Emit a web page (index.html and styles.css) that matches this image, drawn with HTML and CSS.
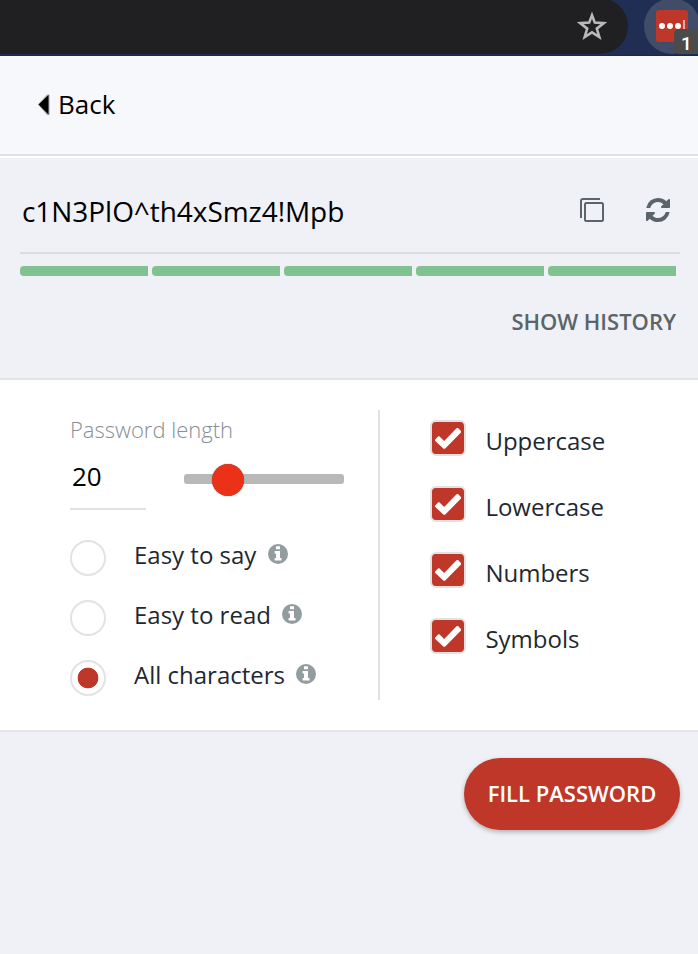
FILE: index.html
```html
<!DOCTYPE html>
<html lang="en">
<head>
<meta charset="utf-8">
<title>Generate Password</title>
<link rel="stylesheet" href="styles.css">
</head>
<body>
<div class="browser-bar">
  <div class="address">
    <svg class="star" width="30" height="30" viewBox="0 0 30 30"><path d="M15 4.2 L17.8 11.6 L26.8 12.2 L19.8 17.6 L22.3 26 L15 21.3 L7.7 26 L10.2 17.6 L3.2 12.2 L12.2 11.6 Z"/></svg>
  </div>
  <div class="extension">
    <div class="ext-icon">
      <svg width="32" height="32" viewBox="0 0 32 32"><circle cx="6" cy="16" r="3"/><circle cx="14" cy="16" r="3"/><circle cx="22" cy="16" r="3"/><rect x="27" y="10" width="2" height="12"/></svg>
    </div>
    <span class="badge">1</span>
  </div>
</div>
<header class="back-bar">
  <svg class="back-arrow" width="14" height="24" viewBox="0 0 14 24"><path class="arrow-edge" d="M1 11.5 L10 1.5 H12.500 V22 H10 Z"/><path d="M1.500 11.5 L11.500 2 V21.5 Z"/></svg>
  <span>Back</span>
</header>
<section class="result">
  <div class="password-row">
    <span class="password">c1N3PlO^th4xSmz4!Mpb</span>
    <svg class="copy" width="24" height="24" viewBox="0 0 24 24"><path d="M1 20 V3 Q1 1 3 1 H20"/><rect x="5" y="5" width="18" height="18" rx="1.5"/></svg>
    <svg class="refresh" width="24" height="24" viewBox="0 0 1536 1536"><path d="M1511 928q0 5-1 7-64 268-268 434.500T764 1536q-146 0-282.500-55T238 1324l-129 129q-19 19-45 19t-45-19-19-45V960q0-26 19-45t45-19h448q26 0 45 19t19 45-19 45l-137 137q71 66 161 102t187 36q134 0 250-65t186-179q11-17 53-117 8-23 30-23h192q13 0 22.500 9.500T1511 928zM1536 128v448q0 26-19 45t-45 19h-448q-26 0-45-19t-19-45 19-45l138-138Q969 256 768 256q-134 0-250 65T332 500q-11 17-53 117-8 23-30 23H50q-13 0-22.500-9.500T18 608v-7q65-268 270-434.500T768 0q146 0 284 55.500T1297 212l130-129q19-19 45-19t45 19 19 45z"/></svg>
  </div>
  <div class="strength"><i></i><i></i><i></i><i></i><i></i></div>
  <div class="history">SHOW HISTORY</div>
</section>
<main class="options">
  <div class="left">
    <div class="length-label">Password length</div>
    <div class="length-row">
      <div class="length-value">20</div>
      <div class="slider"><div class="thumb"></div></div>
    </div>
    <div class="radio-row"><span class="radio"></span><span class="label">Easy to say</span><svg class="info" width="20" height="20" viewBox="0 0 20 20"><circle cx="10" cy="10" r="10"/><path d="M8 2.3h4v3H8zM6.6 7h5.4v7h1.5v2.6H6.6V14H8V9.600H6.600z"/></svg></div>
    <div class="radio-row"><span class="radio"></span><span class="label">Easy to read</span><svg class="info" width="20" height="20" viewBox="0 0 20 20"><circle cx="10" cy="10" r="10"/><path d="M8 2.3h4v3H8zM6.6 7h5.4v7h1.5v2.6H6.6V14H8V9.600H6.600z"/></svg></div>
    <div class="radio-row"><span class="radio checked"></span><span class="label">All characters</span><svg class="info" width="20" height="20" viewBox="0 0 20 20"><circle cx="10" cy="10" r="10"/><path d="M8 2.3h4v3H8zM6.6 7h5.4v7h1.5v2.6H6.6V14H8V9.600H6.600z"/></svg></div>
  </div>
  <div class="right">
    <div class="check-row"><span class="check"><svg width="32" height="32" viewBox="0 0 32 32"><path d="M3 17.700 L6.300 14.300 H7.300 L12.200 19 L24.800 6 H26 L29 9 V10.600 L13 26.800 H11.600 L3 18.800 Z"/></svg></span><span>Uppercase</span></div>
    <div class="check-row"><span class="check"><svg width="32" height="32" viewBox="0 0 32 32"><path d="M3 17.700 L6.300 14.300 H7.300 L12.200 19 L24.800 6 H26 L29 9 V10.600 L13 26.800 H11.600 L3 18.800 Z"/></svg></span><span>Lowercase</span></div>
    <div class="check-row"><span class="check"><svg width="32" height="32" viewBox="0 0 32 32"><path d="M3 17.700 L6.300 14.300 H7.300 L12.200 19 L24.800 6 H26 L29 9 V10.600 L13 26.800 H11.600 L3 18.800 Z"/></svg></span><span>Numbers</span></div>
    <div class="check-row"><span class="check"><svg width="32" height="32" viewBox="0 0 32 32"><path d="M3 17.700 L6.300 14.300 H7.300 L12.200 19 L24.800 6 H26 L29 9 V10.600 L13 26.800 H11.600 L3 18.800 Z"/></svg></span><span>Symbols</span></div>
  </div>
</main>
<footer class="actions"><button class="fill">FILL PASSWORD</button></footer>
</body>
</html>
```
FILE: styles.css
```css
* { box-sizing: border-box; }
body {
  margin: 0;
  width: 698px;
  height: 954px;
  overflow: hidden;
  background: #eff1f6;
  font-family: "Open Sans", "Noto Sans", sans-serif;
  color: #000;
}
svg { display: block; flex: none; }

.browser-bar {
  display: flex;
  height: 56px;
  background: #1f2e52;
  border-bottom: 1px solid #1b2948;
  overflow: hidden;
}
.address {
  display: flex;
  flex: none;
  justify-content: flex-end;
  width: 628px;
  height: 56px;
  margin-top: -2px;
  padding: 13px 21px 0 0;
  background: #202023;
  border-radius: 0 28px 28px 0;
}
.star { fill: none; stroke: #b9b9ba; stroke-width: 2.6; }
.extension {
  position: relative;
  flex: none;
  width: 56px;
  height: 56px;
  margin: -2px 0 0 16px;
  padding: 12px;
  border-radius: 50%;
  background: #404c68;
}
.ext-icon {
  width: 32px;
  height: 32px;
  border-radius: 3px;
  background: #be3728;
  fill: #fff;
}
.ext-icon rect { fill: #e5aaa3; }
.badge {
  position: absolute;
  left: 30px;
  top: 31px;
  width: 32px;
  height: 25px;
  padding-left: 7px;
  border-radius: 5px;
  background: #4b4b4b;
  color: #fff;
  font: 500 19px/29px Roboto, sans-serif;
}

.back-bar {
  display: flex;
  height: 102px;
  padding: 0 0 0 37px;
  background: #f7f8fb;
  border-bottom: 2px solid #fff;
  box-shadow: inset 0 -2px #e0e1e4;
  font-size: 26px;
  line-height: 96px;
}
.back-arrow { margin: 37px 7px 0 0; }
.arrow-edge { fill: #aaa; }

.result {
  height: 222px;
  padding: 0 18px 0 20px;
  border-bottom: 2px solid #e4e4e5;
}
.password-row {
  display: flex;
  align-items: center;
  height: 96px;
  padding: 10px 10px 0 2px;
  border-bottom: 2px solid #dddddf;
}
.password { flex: 1; padding-top: 2px; font-size: 28px; line-height: 38px; letter-spacing: -.05px; }
.copy { fill: none; stroke: #5b6468; stroke-width: 2; margin-right: 42px; }
.refresh { fill: #5b6468; }
.strength { display: flex; gap: 4px; margin-top: 12px; }
.strength i {
  width: 128px;
  height: 10px;
  border-radius: 4px 0 0 4px;
  background: #80c290;
}
.history {
  margin: 29px 4px 0 0;
  text-align: right;
  font-size: 22px;
  font-weight: 600;
  line-height: 32px;
  color: #5b6468;
}

.options {
  display: flex;
  height: 352px;
  padding: 30px 0 30px 70px;
  background: #fff;
  border-bottom: 2px solid #e4e5e6;
}
.left {
  width: 310px;
  height: 290px;
  padding-top: 3px;
  border-right: 2px solid #e1e1e2;
}
.length-label {
  margin-bottom: 1px;
  font-size: 22px;
  font-weight: 300;
  line-height: 32px;
  color: #858f94;
}
.length-row { display: flex; height: 64px; }
.length-value {
  width: 76px;
  height: 64px;
  padding-left: 2px;
  border-bottom: 2px solid #e1e1e2;
  font-size: 26px;
  line-height: 60px;
}
.slider {
  width: 160px;
  height: 10px;
  margin: 28px 0 0 38px;
  border-radius: 3px;
  background: #b9b9b9;
}
.thumb {
  width: 32px;
  height: 32px;
  margin: -10px 0 0 28px;
  border-radius: 50%;
  background: #eb3218;
  box-shadow: 0 0 1px #555;
}
.radio-row {
  display: flex;
  height: 36px;
  margin-top: 24px;
  font-size: 24px;
  color: #1e2832;
}
.length-row + .radio-row { margin-top: 30px; }
.radio {
  width: 36px;
  height: 36px;
  margin-right: 28px;
  padding: 6px;
  border: 2px solid #e3e3e3;
  border-radius: 50%;
}
.radio.checked { background: radial-gradient(circle, #be3728 10px, #fff 10.7px); }
.label { line-height: 30px; }
.info { margin: 4px 0 0 11.4px; fill: #939c9f; }
.info path { fill: #fff; }

.right { padding: 10px 0 0 50px; }
.check-row {
  display: flex;
  height: 36px;
  margin-bottom: 30px;
  font-size: 24px;
  line-height: 42px;
  color: #1e2832;
}
.check {
  width: 36px;
  height: 36px;
  margin-right: 19.4px;
  border: 2px solid #e1e1e3;
  border-radius: 6px;
  background: #be3728;
}
.check path { fill: #fff; }

.actions { display: flex; justify-content: flex-end; padding: 26px 18px 0 0; }
.fill {
  width: 216px;
  height: 72px;
  padding: 0 0 2px;
  border: 0;
  border-radius: 36px;
  background: #be3728;
  box-shadow: 0 2px 5px rgba(0,0,0,.28);
  color: #fff;
  font: 600 22px/70px "Open Sans", sans-serif;
}
```
